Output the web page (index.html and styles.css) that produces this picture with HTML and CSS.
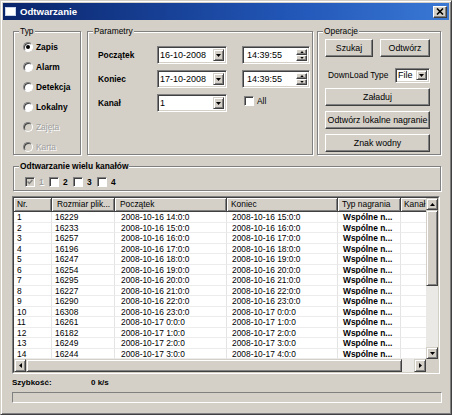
FILE: index.html
```html
<!DOCTYPE html>
<html>
<head>
<meta charset="utf-8">
<title>Odtwarzanie</title>
<link rel="stylesheet" href="styles.css">
</head>
<body>
<div class="window">
  <div class="titlebar">
    <svg class="app-icon" width="11" height="9" viewBox="0 0 11 9"><rect x="0.5" y="0.5" width="10" height="8" fill="#fff" stroke="#c8d4ec"/></svg>
    <span class="title">Odtwarzanie</span>
    <span class="close"><svg width="8" height="7" viewBox="0 0 8 7"><path d="M1 0.5 L7 6.5 M7 0.5 L1 6.5" stroke="#000" stroke-width="1.6"/></svg></span>
  </div>
  <div class="content">
    <div class="top-row">
      <div class="group g-typ">
        <div class="legend">Typ</div>
        <div class="radios">
          <div class="radio-row"><span class="radio checked"></span><span class="rlabel">Zapis</span></div>
          <div class="radio-row"><span class="radio"></span><span class="rlabel">Alarm</span></div>
          <div class="radio-row"><span class="radio"></span><span class="rlabel">Detekcja</span></div>
          <div class="radio-row"><span class="radio"></span><span class="rlabel">Lokalny</span></div>
          <div class="radio-row disabled"><span class="radio"></span><span class="rlabel">Zajęta</span></div>
          <div class="radio-row disabled"><span class="radio"></span><span class="rlabel">Karta</span></div>
        </div>
      </div>
      <div class="group g-param">
        <div class="legend">Parametry</div>
        <div class="param-grid">
          <span class="plabel">Początek</span>
          <div class="field combo"><span class="ftext">16-10-2008</span><span class="dropbtn"><svg width="5" height="3" viewBox="0 0 5 3"><polygon points="0,0 5,0 2.5,3" fill="#000"/></svg></span></div>
          <span></span>
          <div class="field time"><span class="ftext">14:39:55</span><span class="spin"><span class="spin-half"><svg width="5" height="3" viewBox="0 0 5 3"><polygon points="0,3 5,3 2.5,0" fill="#000"/></svg></span><span class="spin-half"><svg width="5" height="3" viewBox="0 0 5 3"><polygon points="0,0 5,0 2.5,3" fill="#000"/></svg></span></span></div>

          <span class="plabel">Koniec</span>
          <div class="field combo"><span class="ftext">17-10-2008</span><span class="dropbtn"><svg width="5" height="3" viewBox="0 0 5 3"><polygon points="0,0 5,0 2.5,3" fill="#000"/></svg></span></div>
          <span></span>
          <div class="field time"><span class="ftext">14:39:55</span><span class="spin"><span class="spin-half"><svg width="5" height="3" viewBox="0 0 5 3"><polygon points="0,3 5,3 2.5,0" fill="#000"/></svg></span><span class="spin-half"><svg width="5" height="3" viewBox="0 0 5 3"><polygon points="0,0 5,0 2.5,3" fill="#000"/></svg></span></span></div>

          <span class="plabel">Kanał</span>
          <div class="field combo"><span class="ftext">1</span><span class="dropbtn"><svg width="5" height="3" viewBox="0 0 5 3"><polygon points="0,0 5,0 2.5,3" fill="#000"/></svg></span></div>
          <span></span>
          <div class="all"><span class="check"></span><span>All</span></div>
        </div>
      </div>
      <div class="group g-oper">
        <div class="legend">Operacje</div>
        <div class="oper">
          <div class="btn-row">
            <span class="btn b-szukaj">Szukaj</span>
            <span class="btn b-odtworz">Odtwórz</span>
          </div>
          <div class="dl-row">
            <span class="dl-label">DownLoad Type</span>
            <div class="field select"><span class="ftext">File</span><span class="dropbtn"><svg width="5" height="3" viewBox="0 0 5 3"><polygon points="0,0 5,0 2.5,3" fill="#000"/></svg></span></div>
          </div>
          <span class="btn wide">Załaduj</span>
          <span class="btn wide">Odtwórz lokalne nagranie</span>
          <span class="btn wide">Znak wodny</span>
        </div>
      </div>
    </div>

    <div class="group g-multi">
      <div class="legend bold">Odtwarzanie wielu kanałów</div>
      <div class="multi-row">
        <div class="mitem disabled"><span class="check checked"><svg width="6" height="6" viewBox="0 0 6 6"><path d="M0.6 2.6 L2.3 4.4 L5.4 0.9" fill="none" stroke="#808080" stroke-width="1.5"/></svg></span><span class="mlabel">1</span></div>
        <div class="mitem"><span class="check"></span><span class="mlabel">2</span></div>
        <div class="mitem"><span class="check"></span><span class="mlabel">3</span></div>
        <div class="mitem"><span class="check"></span><span class="mlabel">4</span></div>
      </div>
    </div>

    <div class="list">
      <div class="list-inner">
        <div class="list-main">
          <div class="lrow header">
            <span class="hc c-nr">Nr.</span>
            <span class="hc c-size">Rozmiar plik...</span>
            <span class="hc c-start">Początek</span>
            <span class="hc c-end">Koniec</span>
            <span class="hc c-type">Typ nagrania</span>
            <span class="hc c-ch">Kanał</span>
          </div>
          <div class="lrow"><span class="c c-nr">1</span><span class="c c-size">16229</span><span class="c c-start">2008-10-16 14:0:0</span><span class="c c-end">2008-10-16 15:0:0</span><span class="c c-type">Wspólne n...</span><span class="c c-ch"></span></div>
          <div class="lrow"><span class="c c-nr">2</span><span class="c c-size">16233</span><span class="c c-start">2008-10-16 15:0:0</span><span class="c c-end">2008-10-16 16:0:0</span><span class="c c-type">Wspólne n...</span><span class="c c-ch"></span></div>
          <div class="lrow"><span class="c c-nr">3</span><span class="c c-size">16257</span><span class="c c-start">2008-10-16 16:0:0</span><span class="c c-end">2008-10-16 17:0:0</span><span class="c c-type">Wspólne n...</span><span class="c c-ch"></span></div>
          <div class="lrow"><span class="c c-nr">4</span><span class="c c-size">16196</span><span class="c c-start">2008-10-16 17:0:0</span><span class="c c-end">2008-10-16 18:0:0</span><span class="c c-type">Wspólne n...</span><span class="c c-ch"></span></div>
          <div class="lrow"><span class="c c-nr">5</span><span class="c c-size">16247</span><span class="c c-start">2008-10-16 18:0:0</span><span class="c c-end">2008-10-16 19:0:0</span><span class="c c-type">Wspólne n...</span><span class="c c-ch"></span></div>
          <div class="lrow"><span class="c c-nr">6</span><span class="c c-size">16254</span><span class="c c-start">2008-10-16 19:0:0</span><span class="c c-end">2008-10-16 20:0:0</span><span class="c c-type">Wspólne n...</span><span class="c c-ch"></span></div>
          <div class="lrow"><span class="c c-nr">7</span><span class="c c-size">16295</span><span class="c c-start">2008-10-16 20:0:0</span><span class="c c-end">2008-10-16 21:0:0</span><span class="c c-type">Wspólne n...</span><span class="c c-ch"></span></div>
          <div class="lrow"><span class="c c-nr">8</span><span class="c c-size">16227</span><span class="c c-start">2008-10-16 21:0:0</span><span class="c c-end">2008-10-16 22:0:0</span><span class="c c-type">Wspólne n...</span><span class="c c-ch"></span></div>
          <div class="lrow"><span class="c c-nr">9</span><span class="c c-size">16290</span><span class="c c-start">2008-10-16 22:0:0</span><span class="c c-end">2008-10-16 23:0:0</span><span class="c c-type">Wspólne n...</span><span class="c c-ch"></span></div>
          <div class="lrow"><span class="c c-nr">10</span><span class="c c-size">16308</span><span class="c c-start">2008-10-16 23:0:0</span><span class="c c-end">2008-10-17 0:0:0</span><span class="c c-type">Wspólne n...</span><span class="c c-ch"></span></div>
          <div class="lrow"><span class="c c-nr">11</span><span class="c c-size">16261</span><span class="c c-start">2008-10-17 0:0:0</span><span class="c c-end">2008-10-17 1:0:0</span><span class="c c-type">Wspólne n...</span><span class="c c-ch"></span></div>
          <div class="lrow"><span class="c c-nr">12</span><span class="c c-size">16182</span><span class="c c-start">2008-10-17 1:0:0</span><span class="c c-end">2008-10-17 2:0:0</span><span class="c c-type">Wspólne n...</span><span class="c c-ch"></span></div>
          <div class="lrow"><span class="c c-nr">13</span><span class="c c-size">16249</span><span class="c c-start">2008-10-17 2:0:0</span><span class="c c-end">2008-10-17 3:0:0</span><span class="c c-type">Wspólne n...</span><span class="c c-ch"></span></div>
          <div class="lrow"><span class="c c-nr">14</span><span class="c c-size">16244</span><span class="c c-start">2008-10-17 3:0:0</span><span class="c c-end">2008-10-17 4:0:0</span><span class="c c-type">Wspólne n...</span><span class="c c-ch"></span></div>
        </div>
        <div class="vscroll">
          <span class="sbtn"><svg width="5" height="3" viewBox="0 0 5 3"><polygon points="0,3 5,3 2.5,0" fill="#000"/></svg></span>
          <span class="vthumb"></span>
          <span class="vtrack"></span>
          <span class="sbtn"><svg width="5" height="3" viewBox="0 0 5 3"><polygon points="0,0 5,0 2.5,3" fill="#000"/></svg></span>
        </div>
        <div class="hscroll">
          <span class="sbtn"><svg width="3" height="5" viewBox="0 0 3 5"><polygon points="3,0 3,5 0,2.5" fill="#000"/></svg></span>
          <span class="hthumb"></span>
          <span class="htrack"></span>
          <span class="sbtn"><svg width="3" height="5" viewBox="0 0 3 5"><polygon points="0,0 0,5 3,2.5" fill="#000"/></svg></span>
        </div>
        <div class="corner"></div>
      </div>
    </div>

    <div class="status">
      <span class="s-label">Szybkość:</span>
      <span class="s-value">0 k/s</span>
    </div>
    <div class="progress"></div>
  </div>
</div>
</body>
</html>
```

FILE: styles.css
```css
* { box-sizing: border-box; }
html, body { margin: 0; padding: 0; }
body {
  background: #d4d0c8;
  font-family: "Liberation Sans", Arial, sans-serif;
  font-size: 8.4px;
  color: #000;
  line-height: 1.2;
}
.window {
  width: 452px;
  height: 415px;
  background: #d4d0c8;
  border: 1px solid;
  border-color: #d4d0c8 #404040 #404040 #d4d0c8;
  box-shadow: inset 1px 1px 0 #fff, inset -1px -1px 0 #808080;
  padding: 2px;
  display: flex;
  flex-direction: column;
  overflow: hidden;
}
.titlebar {
  height: 17px;
  flex: none;
  display: flex;
  align-items: center;
  padding: 0 2px;
  background: linear-gradient(90deg, #0a246a 0%, #2257b8 65%, #3a78d4 100%);
}
.app-icon { display: block; margin-right: 4px; flex: none; }
.title {
  flex: 1;
  color: #fff;
  font-weight: bold;
  font-size: 9.6px;
  line-height: 17px;
  white-space: nowrap;
}
.close {
  width: 14px;
  height: 12px;
  flex: none;
  background: #d4d0c8;
  border: 1px solid;
  border-color: #fff #404040 #404040 #fff;
  box-shadow: inset -1px -1px 0 #808080;
  display: flex;
  align-items: center;
  justify-content: center;
}
.close svg { display: block; }

.content {
  flex: 1;
  display: flex;
  flex-direction: column;
  padding: 11px 7px 0 9px;
}
.top-row {
  display: flex;
  height: 124px;
  margin-left: 1px;
  flex: none;
}
.group {
  border: 1px solid #808080;
  box-shadow: 1px 1px 0 #fff, inset 1px 1px 0 #fff;
  display: flex;
  flex-direction: column;
  flex: none;
}
.legend {
  margin: -6px 0 0 5px;
  padding: 0 1px;
  background: #d4d0c8;
  line-height: 11px;
  height: 11px;
  align-self: flex-start;
  white-space: nowrap;
}
.legend.bold { font-weight: bold; }
.g-typ { width: 68px; margin-right: 6px; }
.g-param { width: 226px; margin-right: 4px; }
.g-oper { width: 124px; }

/* radios */
.radios { display: flex; flex-direction: column; padding-left: 9px; }
.radio-row { height: 20px; display: flex; align-items: center; }
.radio {
  width: 10px;
  height: 10px;
  border-radius: 50%;
  border: 1px solid;
  border-color: #808080 #fff #fff #808080;
  box-shadow: inset 1px 1px 0 #404040;
  background: #fff;
  margin-right: 3px;
  display: flex;
  align-items: center;
  justify-content: center;
  flex: none;
}
.radio.checked::after {
  content: "";
  width: 4px;
  height: 4px;
  border-radius: 50%;
  background: #000;
}
.rlabel { font-weight: bold; white-space: nowrap; }
.radio-row.disabled .radio { background: #d4d0c8; }
.radio-row.disabled .rlabel { color: #a0a0a0; font-weight: normal; text-shadow: 1px 1px 0 #fff; }

/* parameters */
.param-grid {
  display: grid;
  grid-template-columns: 59px 70px 15px 68px;
  grid-template-rows: 18px 18px 18px;
  row-gap: 6px;
  padding: 9px 0 0 10px;
}
.plabel { font-weight: bold; align-self: center; white-space: nowrap; }
.field {
  height: 18px;
  border: 1px solid;
  border-color: #808080 #fff #fff #808080;
  box-shadow: inset 1px 1px 0 #404040, inset -1px -1px 0 #d4d0c8;
  background: #fff;
  display: flex;
  align-items: center;
  padding: 2px;
  font-size: 9px;
}
.ftext { flex: 1; white-space: nowrap; overflow: hidden; line-height: 12px; }
.field.time .ftext { padding-left: 2px; }
.dropbtn {
  width: 11px;
  height: 100%;
  flex: none;
  background: #d4d0c8;
  border: 1px solid;
  border-color: #d4d0c8 #404040 #404040 #d4d0c8;
  box-shadow: inset 1px 1px 0 #fff, inset -1px -1px 0 #808080;
  display: flex;
  align-items: center;
  justify-content: center;
}
.dropbtn svg, .sbtn svg, .spin-half svg { display: block; }
.spin {
  width: 11px;
  height: 100%;
  flex: none;
  display: flex;
  flex-direction: column;
}
.spin-half {
  flex: 1;
  background: #d4d0c8;
  border: 1px solid;
  border-color: #fff #404040 #404040 #fff;
  box-shadow: inset -1px -1px 0 #808080;
  display: flex;
  align-items: center;
  justify-content: center;
}
.spin-half svg { width: 4px; height: 2px; }
.all {
  display: flex;
  align-items: center;
  height: 12px;
  align-self: start;
  margin: 1px 0 0 2px;
}
.check {
  width: 10px;
  height: 10px;
  flex: none;
  border: 1px solid;
  border-color: #808080 #fff #fff #808080;
  box-shadow: inset 1px 1px 0 #404040;
  background: #fff;
  margin-right: 3px;
  display: flex;
  align-items: center;
  justify-content: center;
}
.check svg { display: block; }
.check.checked { background: #d4d0c8; }

/* operations */
.oper {
  display: flex;
  flex-direction: column;
  padding: 2px 10px 0 7px;
}
.btn-row { display: flex; gap: 7px; }
.btn {
  height: 18px;
  background: #d4d0c8;
  border: 1px solid;
  border-color: #fff #404040 #404040 #fff;
  box-shadow: inset -1px -1px 0 #808080;
  display: flex;
  align-items: center;
  justify-content: center;
  font-size: 8.8px;
  white-space: nowrap;
  flex: none;
}
.b-szukaj { width: 48px; }
.b-odtworz { width: 50px; }
.btn.wide { width: 105px; margin-top: 5px; }
.dl-row {
  display: flex;
  align-items: center;
  justify-content: space-between;
  margin-top: 11px;
  height: 15px;
}
.dl-label { padding-left: 3px; white-space: nowrap; }
.field.select { width: 35px; height: 15px; padding: 1px 2px 2px 2px; }
.field.select .ftext { line-height: 11px; }

/* multi channel */
.g-multi { height: 25px; margin: 11px 1px 0 1px; }
.multi-row { display: flex; padding: 5px 0 0 11px; }
.mitem { width: 24px; height: 10px; display: flex; align-items: center; flex: none; }
.mitem .check { margin-right: 4px; }
.mlabel { font-weight: bold; line-height: 10px; }
.mitem.disabled .mlabel { color: #a0a0a0; text-shadow: 1px 1px 0 #fff; }

/* list view */
.list {
  width: 428px;
  height: 178px;
  margin-top: 5px;
  flex: none;
  border: 1px solid;
  border-color: #808080 #fff #fff #808080;
}
.list-inner {
  height: 100%;
  border: 1px solid;
  border-color: #404040 #d4d0c8 #d4d0c8 #404040;
  display: grid;
  grid-template-columns: 412px 12px;
  grid-template-rows: 161px 13px;
  background: #fff;
}
.list-main { overflow: hidden; background: #fff; }
.lrow {
  display: grid;
  grid-template-columns: 38px 63px 112px 111px 63px 40px;
  height: 10.5px;
  line-height: 10px;
  white-space: nowrap;
}
.lrow .c {
  overflow: hidden;
  border-right: 1px solid #e4e4e4;
  border-bottom: 1px solid #ececec;
  padding-left: 4px;
}
.lrow .c.c-nr, .lrow .c.c-size { padding-left: 3px; }
.lrow .c.c-start { padding-left: 6px; }
.lrow .c.c-end { padding-left: 5px; }
.lrow .c.c-type { padding-left: 5px; font-weight: bold; }
.lrow.header { height: 14px; line-height: 12px; }
.hc {
  background: #d4d0c8;
  border-right: 1px solid #404040;
  border-bottom: 1px solid #404040;
  box-shadow: inset 1px 1px 0 #fff, inset -1px -1px 0 #808080;
  padding-left: 4px;
  overflow: hidden;
}
.hc.c-nr { padding-left: 3px; }
.hc.c-size, .hc.c-start { padding-left: 5px; }
.hc.c-ch { padding-left: 3px; }

.vscroll {
  display: flex;
  flex-direction: column;
  background: #ebe9e5;
}
.sbtn {
  width: 12px;
  height: 12px;
  flex: none;
  background: #d4d0c8;
  border: 1px solid;
  border-color: #d4d0c8 #404040 #404040 #d4d0c8;
  box-shadow: inset 1px 1px 0 #fff, inset -1px -1px 0 #808080;
  display: flex;
  align-items: center;
  justify-content: center;
}
.vthumb {
  height: 76px;
  flex: none;
  background: #d4d0c8;
  border: 1px solid;
  border-color: #d4d0c8 #404040 #404040 #d4d0c8;
  box-shadow: inset 1px 1px 0 #fff, inset -1px -1px 0 #808080;
}
.vtrack { flex: 1; }
.hscroll {
  display: flex;
  background: #ebe9e5;
}
.hscroll .sbtn { height: 13px; }
.hthumb {
  width: 376px;
  flex: none;
  background: #d4d0c8;
  border: 1px solid;
  border-color: #d4d0c8 #404040 #404040 #d4d0c8;
  box-shadow: inset 1px 1px 0 #fff, inset -1px -1px 0 #808080;
}
.htrack { flex: 1; }
.corner { background: #d4d0c8; }

/* status */
.status {
  display: flex;
  height: 12px;
  line-height: 12px;
  margin-top: 3px;
  flex: none;
}
.s-label { width: 79px; font-weight: bold; font-size: 8px; }
.s-value { font-weight: bold; font-size: 8px; }
.progress {
  height: 11px;
  margin-top: 3px;
  flex: none;
  border: 1px solid;
  border-color: #808080 #fff #fff #808080;
  background: #d4d0c8;
}
```
